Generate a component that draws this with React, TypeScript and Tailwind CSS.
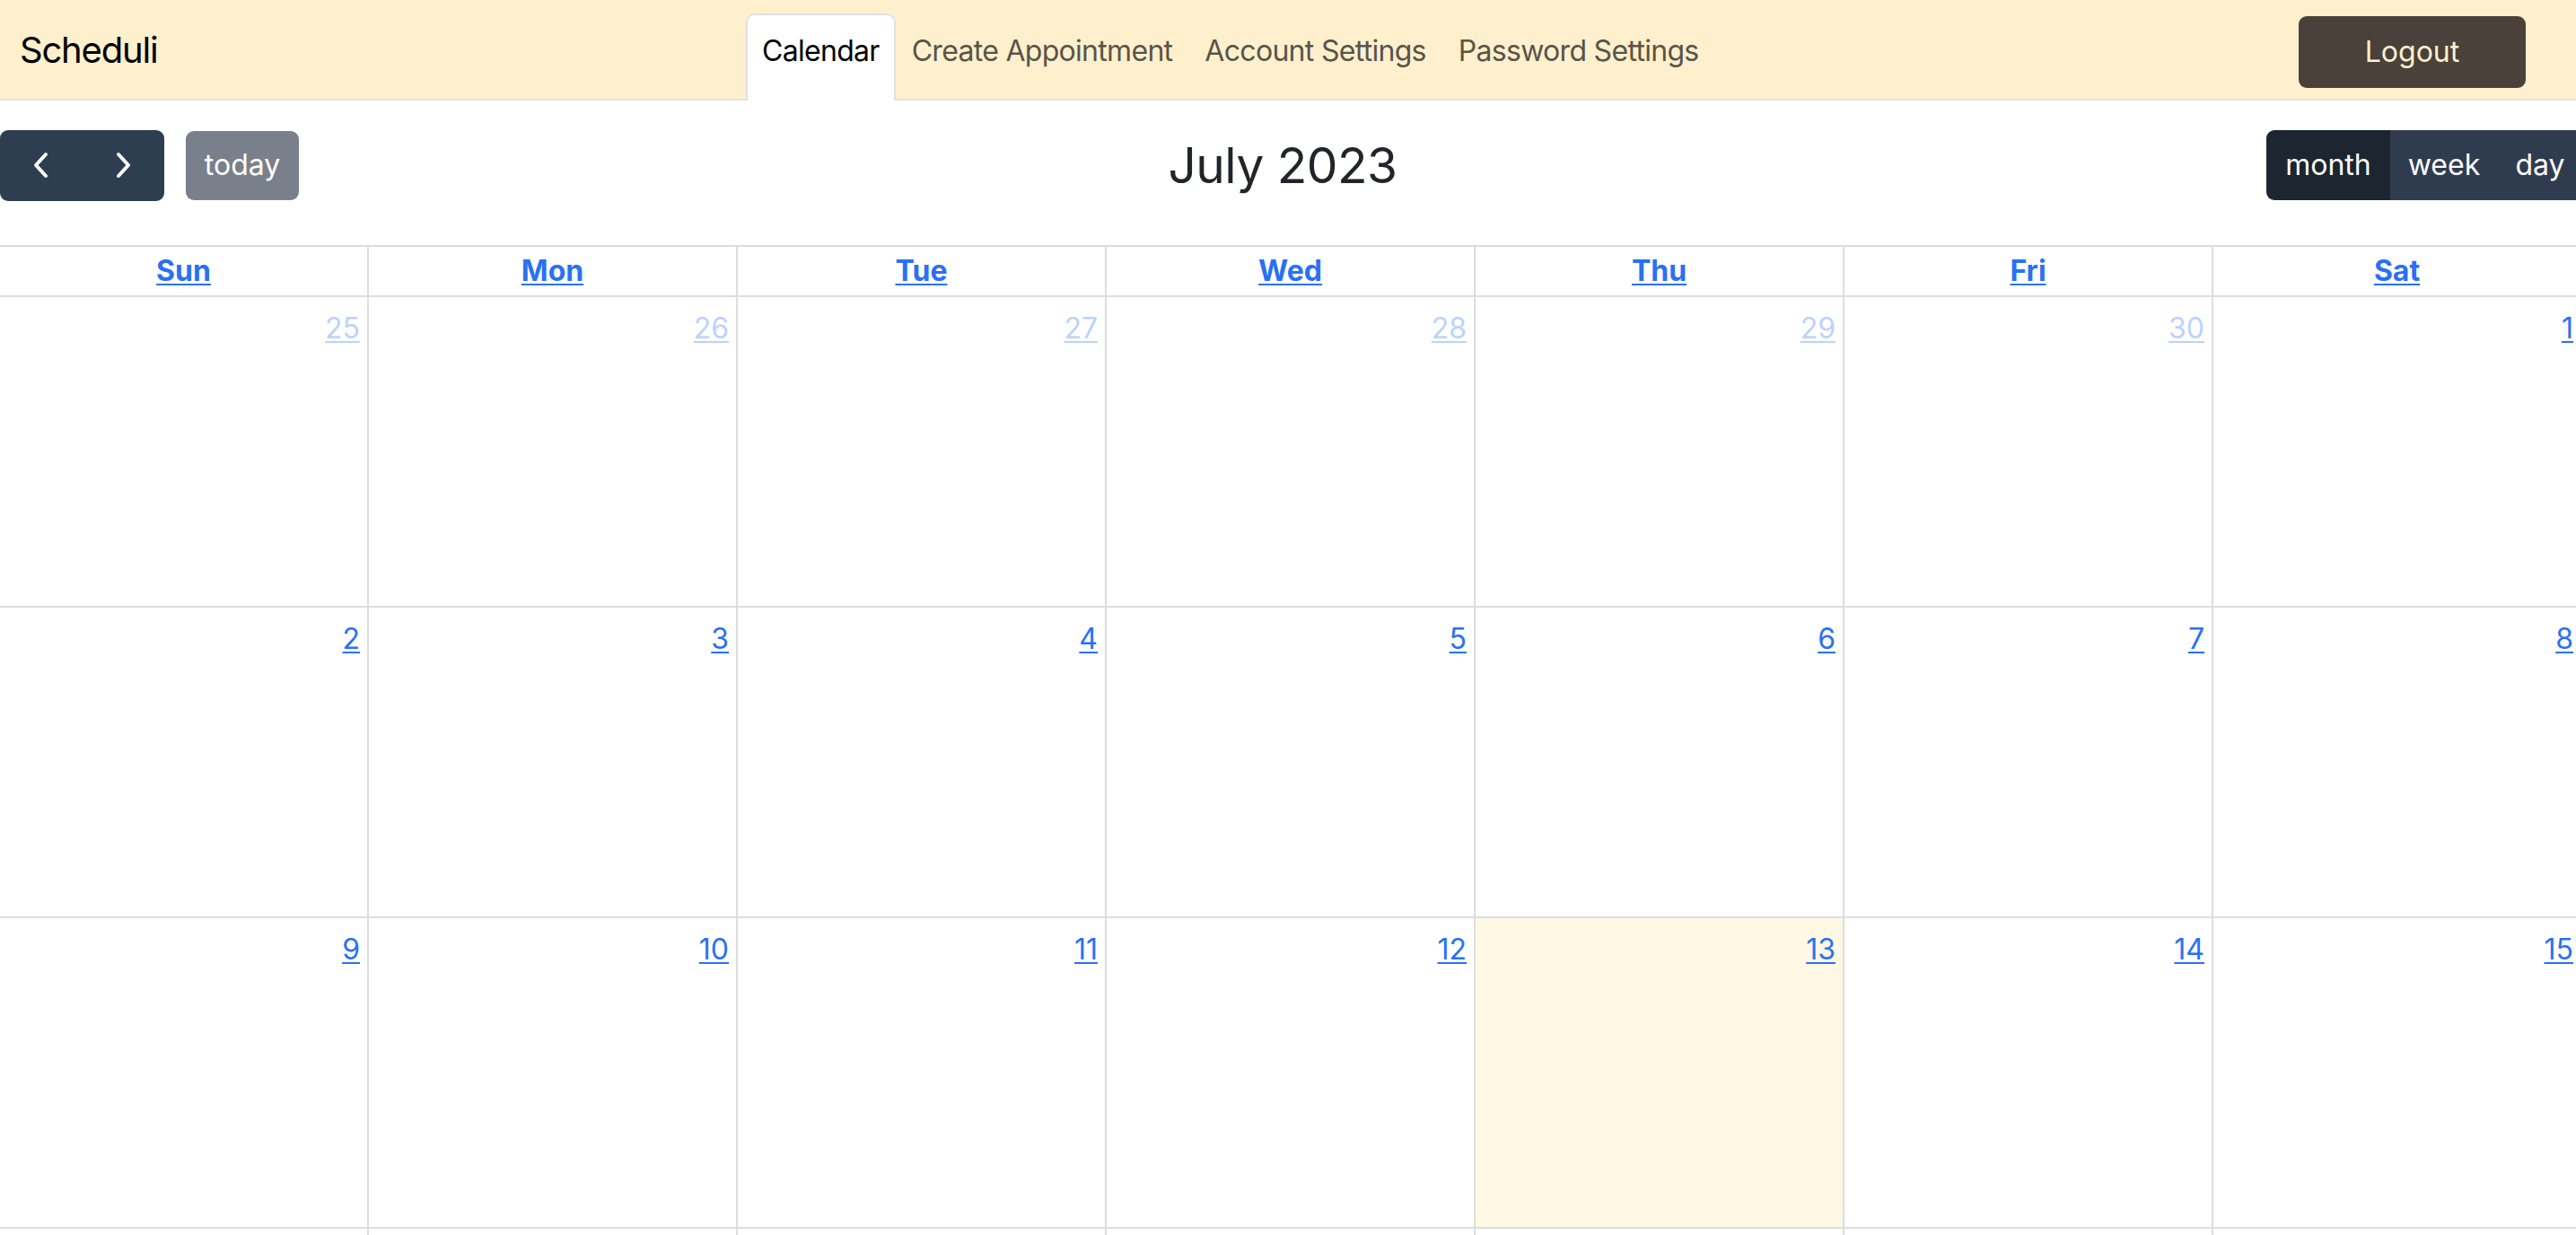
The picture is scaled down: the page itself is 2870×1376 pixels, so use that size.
const tabs = ["Calendar", "Create Appointment", "Account Settings", "Password Settings"];
const dayNames = ["Sun", "Mon", "Tue", "Wed", "Thu", "Fri", "Sat"];

type Day = { n: number; other?: boolean; today?: boolean };

function buildWeeks(): Day[][] {
    const days: Day[] = [];
    for (let d = 25; d <= 30; d++) days.push({ n: d, other: true });
    for (let d = 1; d <= 31; d++) days.push({ n: d, today: d === 13 });
    let next = 1;
    while (days.length < 42) days.push({ n: next++, other: true });
    const weeks: Day[][] = [];
    for (let i = 0; i < days.length; i += 7) weeks.push(days.slice(i, i + 7));
    return weeks;
}

function Chevron({ dir }: { dir: "left" | "right" }) {
    return (
        <svg width="18" height="30" viewBox="0 0 18 30" fill="none">
            <path
                d={dir === "left" ? "M14 3 L3 15 L14 27" : "M4 3 L15 15 L4 27"}
                stroke="white"
                strokeWidth="4"
                strokeLinecap="round"
                strokeLinejoin="round"
            />
        </svg>
    );
}

export default function App() {
    const weeks = buildWeeks();

    return (
        <div className="min-h-screen w-full overflow-hidden bg-white font-['Inter',sans-serif]">

            <nav className="flex h-[112px] items-stretch border-b-2 border-[#dee2e6] bg-[#fef0cd]">
                <div className="flex w-[831px] shrink-0 items-center pl-[22px] pt-[2px] text-[40px] tracking-[-1.2px] text-black">
                    Scheduli
                </div>

                <ul className="flex h-[110px] items-start pt-[15px]">
                    {tabs.map((t, i) => (
                        <li
                            key={t}
                            className={
                                i === 0
                                    ? "h-[97px] rounded-t-[10px] border-2 border-b-0 border-[#dee2e6] bg-white px-4 pt-[16px] text-[32px] leading-[48px] tracking-[-0.7px] text-black"
                                    : "h-[97px] border-2 border-b-0 border-transparent px-4 pt-[16px] text-[32px] leading-[48px] tracking-[-0.7px] text-[#595448]"
                            }
                        >
                            {t}
                        </li>
                    ))}
                </ul>

                <div className="ml-auto flex items-start pt-[18px] pr-[56px]">
                    <button className="flex h-[80px] w-[253px] items-center justify-center rounded-[9px] bg-[#4a413b] text-[32px] text-[#fef0cd]">
                        Logout
                    </button>
                </div>
            </nav>

            <div className="w-[2877px]">

                <div className="mt-[33px] mb-[50px] flex h-[78px] items-center justify-between">
                    <div className="flex items-center">
                        <div className="flex h-[79px] overflow-hidden rounded-[9px] bg-[#2c3e50]">
                            <button className="flex w-[91px] items-center justify-center"><Chevron dir="left" /></button>
                            <button className="flex w-[92px] items-center justify-center"><Chevron dir="right" /></button>
                        </div>
                        <button className="ml-[24px] flex h-[77px] w-[126px] items-center justify-center rounded-[9px] bg-[#7a808b] text-[32px] text-white">
                            today
                        </button>
                    </div>

                    <h2 className="text-[55px] font-normal tracking-[-0.5px] text-[#212529]">July 2023</h2>

                    <div className="flex h-[78px] overflow-hidden rounded-l-[9px] text-[32px] text-white">
                        <button className="flex w-[138px] items-center justify-center bg-[#1c2530]">month</button>
                        <button className="flex w-[120px] items-center justify-center bg-[#2f3c4f]">week</button>
                        <button className="flex w-[94px] items-center justify-center bg-[#2f3c4f]">day</button>
                    </div>
                </div>

                <div className="grid grid-cols-7 border-t-2 border-[#dddddd]">
                    {dayNames.map((d) => (
                        <div key={d} className="flex h-[56px] items-center justify-center border-r-2 border-b-2 border-[#dddddd]">
                            <span className="text-[32px] font-bold leading-[48px] text-[#2a70f5] underline decoration-2 underline-offset-[3px]">{d}</span>
                        </div>
                    ))}

                    {weeks.map((w, wi) =>
                        w.map((day, di) => (
                            <div
                                key={`${wi}-${di}`}
                                className={
                                    day.today
                                        ? "h-[346px] border-r-2 border-b-2 border-[#dddddd] bg-[#fef8e4] pt-[11px] pr-[8px] text-right"
                                        : "h-[346px] border-r-2 border-b-2 border-[#dddddd] pt-[11px] pr-[8px] text-right"
                                }
                            >
                                <span
                                    className={
                                        day.other
                                            ? "text-[32px] leading-[48px] text-[#bcd2fb] underline decoration-2 underline-offset-[3px]"
                                            : "text-[32px] leading-[48px] text-[#2a70f5] underline decoration-2 underline-offset-[3px]"
                                    }
                                >
                                    {day.n}
                                </span>
                            </div>
                        ))
                    )}
                </div>
            </div>
        </div>
    );
}
